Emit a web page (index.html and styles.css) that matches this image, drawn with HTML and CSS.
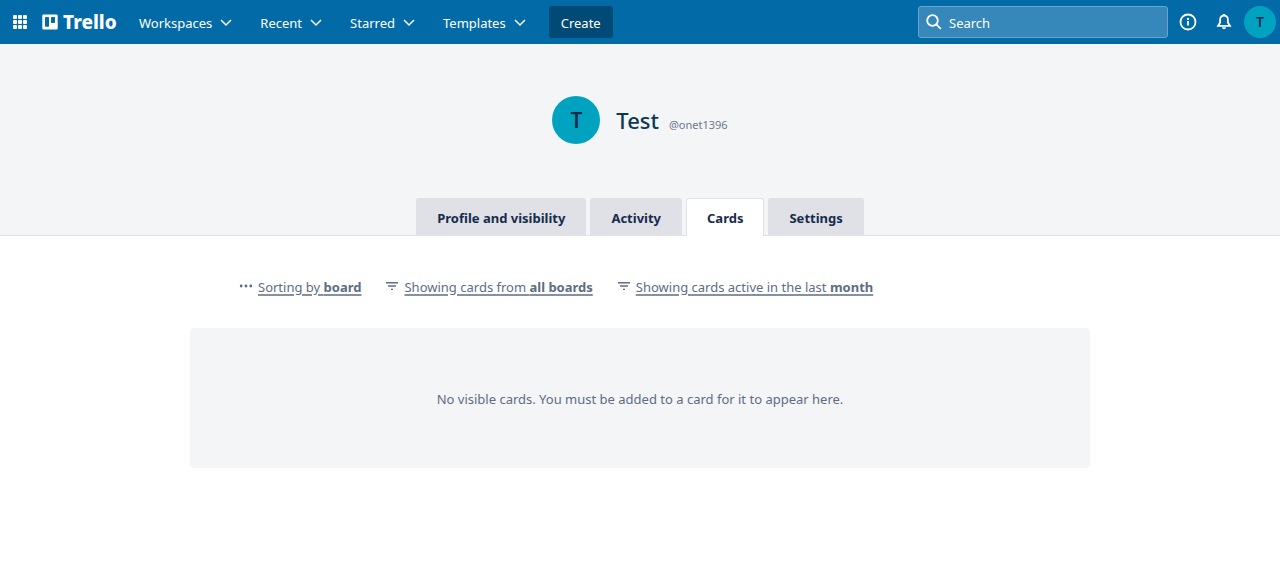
FILE: index.html
```html
<!DOCTYPE html>
<html lang="en">
<head>
<meta charset="utf-8">
<title>Cards | Trello</title>
<link rel="stylesheet" href="styles.css">
</head>
<body>
<header class="topbar">
  <button class="icon-btn apps" aria-label="Switch apps">
    <svg width="14" height="14" viewBox="0 0 14 14" fill="currentColor"><rect width="4" height="4" rx="1"/><rect x="5" width="4" height="4" rx="1"/><rect x="10" width="4" height="4" rx="1"/><rect y="5" width="4" height="4" rx="1"/><rect x="5" y="5" width="4" height="4" rx="1"/><rect x="10" y="5" width="4" height="4" rx="1"/><rect y="10" width="4" height="4" rx="1"/><rect x="5" y="10" width="4" height="4" rx="1"/><rect x="10" y="10" width="4" height="4" rx="1"/></svg>
  </button>
  <a class="brand" href="#">
    <svg width="16" height="16" viewBox="0 0 16 16" fill="currentColor"><path fill-rule="evenodd" d="M1.500 .5h13a1.200 1.200 0 0 1 1.200 1.200v12.600a1.200 1.200 0 0 1-1.200 1.200h-13a1.200 1.200 0 0 1-1.200-1.200V1.700A1.200 1.200 0 0 1 1.500 .5zM3.800 3a.8.8 0 0 0-.8.8v8.200a.8.8 0 0 0 .8.8h2.400a.8.8 0 0 0 .8-.8V3.800a.8.8 0 0 0-.8-.8zM9.800 3a.8.8 0 0 0-.8.8v4.400a.8.8 0 0 0 .8.8h2.400a.8.8 0 0 0 .8-.8V3.800a.8.8 0 0 0-.8-.8z"/></svg>
    <span class="wordmark">Trello</span>
  </a>
  <nav class="menu">
    <button class="menu-btn">Workspaces <svg width="12" height="8" viewBox="0 0 12 8"><path d="M1 1l5 5 5-5"/></svg></button>
    <button class="menu-btn">Recent <svg width="12" height="8" viewBox="0 0 12 8"><path d="M1 1l5 5 5-5"/></svg></button>
    <button class="menu-btn">Starred <svg width="12" height="8" viewBox="0 0 12 8"><path d="M1 1l5 5 5-5"/></svg></button>
    <button class="menu-btn">Templates <svg width="12" height="8" viewBox="0 0 12 8"><path d="M1 1l5 5 5-5"/></svg></button>
  </nav>
  <button class="create">Create</button>
  <label class="search">
    <svg width="16" height="16" viewBox="0 0 16 16"><circle cx="6.500" cy="6.500" r="5.300"/><path d="M10.400 10.400l4.400 4.400"/></svg>
    <input type="text" placeholder="Search" aria-label="Search">
  </label>
  <button class="icon-btn" aria-label="Information">
    <svg class="line" width="18" height="18" viewBox="0 0 18 18"><circle cx="9" cy="9" r="7.500"/><path d="M9 8v4.500M9 5v2"/></svg>
  </button>
  <button class="icon-btn" aria-label="Notifications">
    <svg class="line" width="16" height="18" viewBox="0 0 16 18"><path d="M8 2.500a3.900 3.900 0 0 0-3.900 3.900v3L2 12.900h12l-2.100-3.500v-3A3.900 3.900 0 0 0 8 2.500zM8 1v1.500"/><path d="M6 14.300a2 2 0 0 0 4 0z" fill="currentColor" stroke="none"/></svg>
  </button>
  <button class="avatar small" aria-label="Account">T</button>
</header>
<section class="profile">
  <div class="identity">
    <div class="avatar large">T</div>
    <h1 class="name">Test</h1>
    <span class="handle">@onet1396</span>
  </div>
  <nav class="tabs">
    <a class="tab" href="#">Profile and visibility</a>
    <a class="tab" href="#">Activity</a>
    <a class="tab active" href="#" aria-current="page">Cards</a>
    <a class="tab" href="#">Settings</a>
  </nav>
</section>
<main class="content">
  <div class="filters">
    <a class="filter" href="#"><svg width="14" height="14" viewBox="0 0 14 14" fill="currentColor"><circle cx="2.200" cy="6" r="1.400"/><circle cx="7" cy="6" r="1.400"/><circle cx="11.800" cy="6" r="1.400"/></svg><span>Sorting by <b>board</b></span></a>
    <a class="filter" href="#"><svg width="14" height="14" viewBox="0 0 14 14" fill="currentColor"><path d="M1 2h12v1.400H1zM3 5.300h8v1.400H3zM6 8.800h2v1.200H6z"/></svg><span>Showing cards from <b>all boards</b></span></a>
    <a class="filter" href="#"><svg width="14" height="14" viewBox="0 0 14 14" fill="currentColor"><path d="M1 2h12v1.400H1zM3 5.300h8v1.400H3zM6 8.800h2v1.200H6z"/></svg><span>Showing cards active in the last <b>month</b></span></a>
  </div>
  <p class="empty">No visible cards. You must be added to a card for it to appear here.</p>
</main>
</body>
</html>
```
FILE: styles.css
```css
* { box-sizing: border-box; }
body {
  margin: 0;
  background: #fff;
  color: #172b4d;
  font: 13px/20px "Noto Sans", sans-serif;
}
button { border: 0; padding: 0; background: none; color: inherit; font: inherit; cursor: pointer; }
a { color: inherit; text-decoration: none; }
svg { display: block; flex: none; }
.topbar {
  display: flex;
  align-items: center;
  height: 44px;
  padding: 0 4px;
  background: #026aa7;
  color: #fff;
}
.icon-btn { display: grid; place-items: center; width: 32px; height: 32px; margin-right: 4px; }
.apps { margin: 0; }
.brand { display: flex; align-items: center; gap: 5px; width: 91px; padding-left: 6px; }
.wordmark { font: 800 19px/20px "Noto Sans", sans-serif; }
.menu { display: flex; gap: 4px; }
.menu-btn { display: flex; align-items: center; gap: 8px; height: 32px; padding: 2px 12px 0; white-space: nowrap; }
.menu-btn svg { fill: none; stroke: currentColor; stroke-width: 1.5; }
.create { width: 64px; height: 32px; margin-left: 11px; padding-top: 2px; border-radius: 3px; background: #014a75; }
.search {
  display: flex;
  align-items: center;
  gap: 7px;
  width: 250px;
  height: 32px;
  margin-left: auto;
  margin-right: 4px;
  padding: 0 7px;
  border: 1px solid #67a6ca;
  border-radius: 3px;
  background: #3588b9;
}
.search svg { fill: none; stroke: currentColor; stroke-width: 1.8; }
.search input { flex: 1; min-width: 0; padding: 2px 0 0; border: 0; outline: 0; background: none; color: #fff; font: inherit; }
.search input::placeholder { color: #fff; opacity: 1; }
.line { fill: none; stroke: currentColor; stroke-width: 1.8; }
.avatar { display: grid; place-items: center; flex: none; border-radius: 50%; background: #00a3bf; color: #172b4d; font-weight: 600; }
.small { width: 32px; height: 32px; font-size: 14px; }
.large { width: 48px; height: 48px; font-size: 21px; }
.profile { padding-top: 52px; border-bottom: 1px solid #dfe1e6; background: #f4f5f7; }
.identity { display: flex; justify-content: center; align-items: center; height: 48px; }
.name { margin: 0 10px 0 16px; color: #0c3953; font-size: 22px; line-height: 28px; font-weight: 500; }
.handle { padding-top: 9px; color: #6b778c; font-size: 11px; }
.tabs { display: flex; justify-content: center; gap: 4px; margin: 54px 0 -1px; }
.tab { height: 38px; padding: 9px 20px 0; border: 1px solid #dfe1e6; border-bottom: 0; border-radius: 3px 3px 0 0; background: #dfe1e6; font-weight: 700; }
.active { background: #fff; }
.content { max-width: 900px; margin: 0 auto; padding-top: 41px; }
.filters { display: flex; flex-wrap: wrap; gap: 24px; padding-left: 49px; color: #5e6c84; }
.filter { display: flex; align-items: center; gap: 5px; }
.filter span { text-decoration: underline 2px #8590a2; text-underline-offset: 2px; }
.empty { margin: 31px 0 0; padding: 61px 20px 59px; border-radius: 4px; background: #f4f5f7; color: #5e6c84; text-align: center; }
```
